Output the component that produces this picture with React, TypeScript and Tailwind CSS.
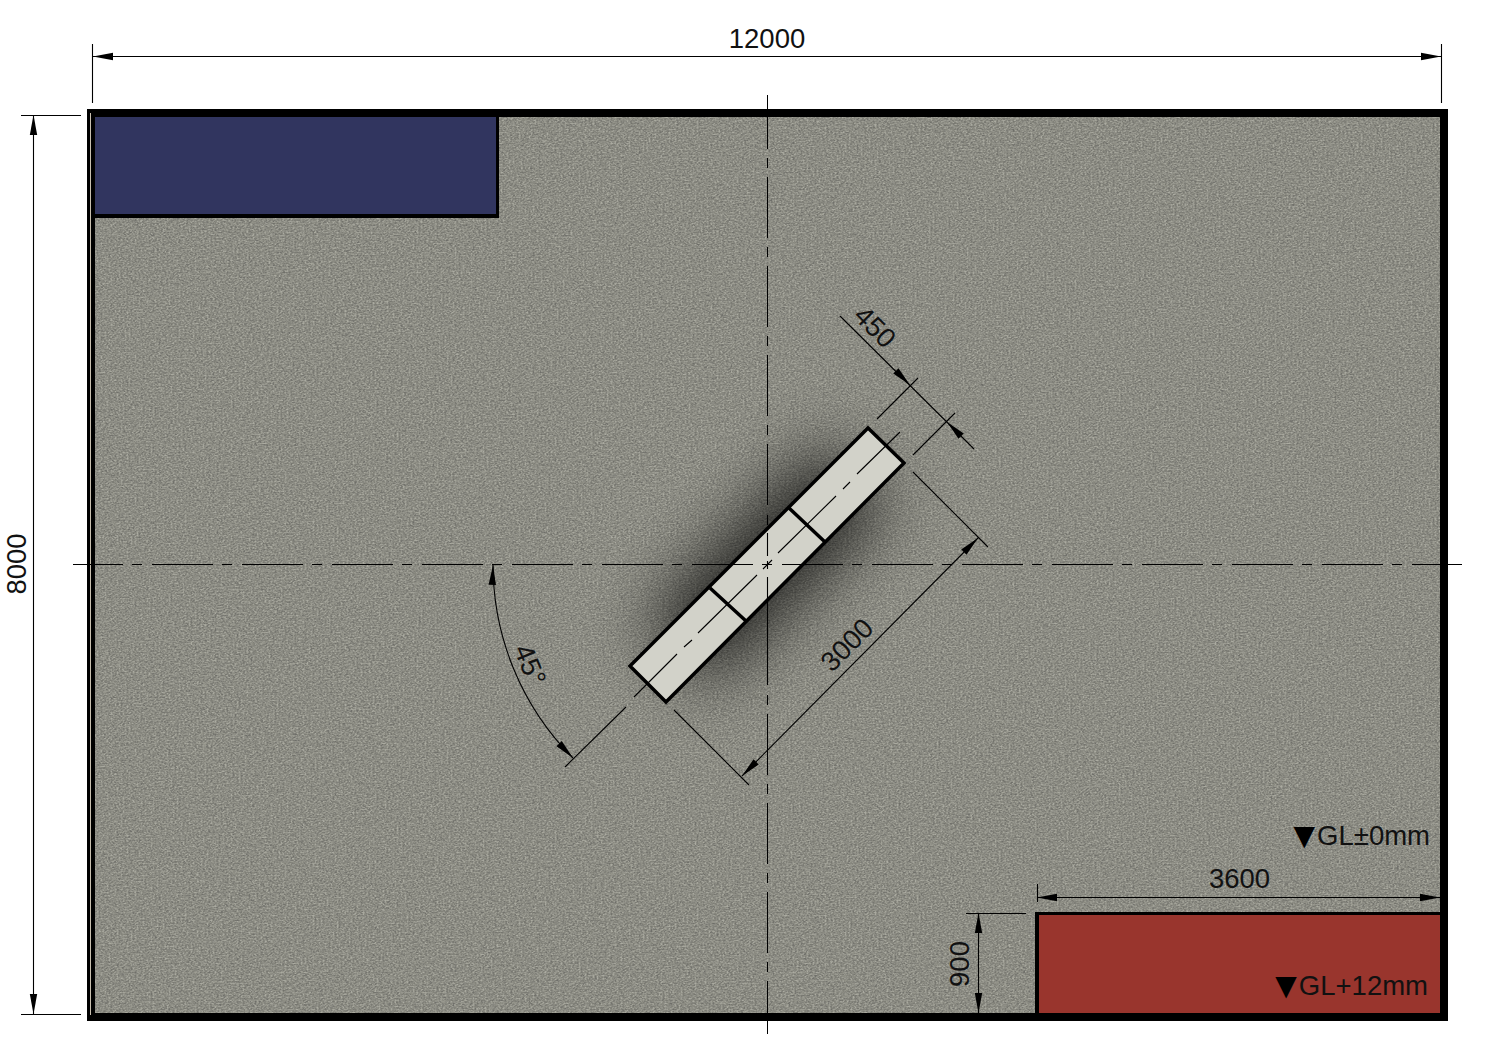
const Arrow = ({ x, y, angle, len = 20, half = 3.7 }: { x: number; y: number; angle: number; len?: number; half?: number }) => (
  // tip sits at x,y and the head points along angle
  <polygon points={`0,0 ${-len},${-half} ${-len},${half}`} fill="#000" transform={`translate(${x} ${y}) rotate(${angle})`} />
);

const Segment = ({ d, w = 1.1 }: { d: string; w?: number }) => <path d={d} fill="none" stroke="#000" strokeWidth={w} />;

const font = "font-['Liberation_Sans',Arial,sans-serif] text-[27.5px] leading-none text-[#111] whitespace-nowrap";
const labelClass = `absolute ${font} -translate-x-1/2 -translate-y-1/2`;

const Level = ({ text }: { text: string }) => (
  <div className={`flex items-center gap-[2px] ${font}`}>
    <span className="font-['DejaVu_Sans',sans-serif] text-[28px] leading-none text-black">▼</span>
    <span>{text}</span>
  </div>
);

export default function App() {
  return (
    <div className="relative w-[1497px] h-[1054px] overflow-hidden bg-white pl-[87px] pt-[109px]">
      {/* ground slab */}
      <div className="relative flex flex-col justify-between w-[1361px] h-[912px] border-[8px] border-black bg-[#87877e] overflow-hidden">
        <svg className="absolute inset-0 w-full h-full" xmlns="http://www.w3.org/2000/svg">
          <defs>
            <filter id="grain" x="0" y="0" width="100%" height="100%" colorInterpolationFilters="sRGB">
              <feTurbulence type="fractalNoise" baseFrequency="0.45 0.6" numOctaves="2" seed="4" />
              <feColorMatrix type="matrix" values="0 0 0 0 0.43  0 0 0 0 0.43  0 0 0 0 0.41  1.6 1.6 0 0 -1.25" />
            </filter>
            <filter id="grainLight" x="0" y="0" width="100%" height="100%" colorInterpolationFilters="sRGB">
              <feTurbulence type="fractalNoise" baseFrequency="0.5 0.65" numOctaves="2" seed="11" />
              <feColorMatrix type="matrix" values="0 0 0 0 0.67  0 0 0 0 0.67  0 0 0 0 0.63  1.6 1.6 0 0 -1.3" />
            </filter>
            <filter id="soft" filterUnits="userSpaceOnUse" x="-500" y="-500" width="1000" height="1000" colorInterpolationFilters="sRGB">
              <feGaussianBlur stdDeviation="34" />
            </filter>
          </defs>
          <rect width="100%" height="100%" filter="url(#grain)" />
          <rect width="100%" height="100%" filter="url(#grainLight)" />
          <rect x="-125" y="-42" width="250" height="84" fill="#000" opacity="0.8" filter="url(#soft)" transform="translate(672 447) rotate(-45)" />
        </svg>
        <div className="relative w-[404px] h-[101px] border-r-[3px] border-b-[4px] border-black bg-[#31355f]" />
        <div className="relative flex flex-col items-end">
          <div className="pr-[10px]">
            <Level text="GL±0mm" />
          </div>
          <div className={`w-[405px] mt-[15px] pl-[4px] text-center ${font}`}>3600</div>
          <div className="flex items-end justify-end w-[405px] h-[101px] mt-[20px] pr-[12px] pb-[13px] border-l-[4px] border-t-[3px] border-black bg-[#99352d]">
            <Level text="GL+12mm" />
          </div>
        </div>
      </div>
      <div className="absolute left-[90px] top-[113px] w-px h-[902px] bg-[#c9c0b0]" />

      {/* beam and dimension lines */}
      <svg className="absolute inset-0 w-full h-full" xmlns="http://www.w3.org/2000/svg">
        <polygon points="868,428 904,463 666,702 630,666" fill="#d2d2c9" stroke="#000" strokeWidth="3.5" strokeLinejoin="miter" />
        <Segment d="M789 508L825 542M710 588L746 621" w={3.5} />

        {/* centre lines */}
        <path d="M73 564.5H1462" stroke="#000" strokeWidth="1" strokeDasharray="61 9 10 10" strokeDashoffset="11" />
        <path d="M767.5 95V506" stroke="#000" strokeWidth="1" strokeDasharray="61 9 10 9" strokeDashoffset="7" />
        <Segment d="M767.5 515V525M767.5 533V556M767.5 561V569M767.5 577V685M767.5 695V705" />
        <path d="M767.5 714V1034" stroke="#000" strokeWidth="1" strokeDasharray="61 9 10 9" />
        <Segment d="M900 432L857 474M850 482L843 489M836 496L778 553M772 560L763 569M757 575L698 633M692 640L684 647M677 654L634 697M626 707L565 767" />

        {/* overall dimensions */}
        <Segment d="M93 56.5H1441M92.5 44V103M1441.5 44V103" />
        <Arrow x={93} y={56.5} angle={180} />
        <Arrow x={1441} y={56.5} angle={0} />
        <Segment d="M33.5 115V1014M21 115.5H81M21 1014.5H81" />
        <Arrow x={33.5} y={115} angle={-90} />
        <Arrow x={33.5} y={1014} angle={90} />

        {/* beam width */}
        <Segment d="M840 316L974 449M877 419L918 378M913 455L955 413" />
        <Arrow x={910} y={385} angle={45} />
        <Arrow x={947} y={422} angle={225} />

        {/* beam length */}
        <Segment d="M978 538L742 776M913 472L988 547M674 710L749 785" />
        <Arrow x={978} y={538} angle={-45} />
        <Arrow x={742} y={776} angle={135} />

        {/* angle */}
        <path d="M493 564A274 274 0 0 0 573 758" fill="none" stroke="#000" strokeWidth="1.1" />
        <Arrow x={493} y={565} angle={-88} />
        <Arrow x={573} y={758} angle={46} />

        {/* red area */}
        <Segment d="M1037 897.5H1440M1037.5 884V902M966 913.5H1026M978.5 913V1013" />
        <Arrow x={1037} y={897.5} angle={180} />
        <Arrow x={1440} y={897.5} angle={0} />
        <Arrow x={978.5} y={913} angle={-90} />
        <Arrow x={978.5} y={1013} angle={90} />
      </svg>

      <span className={`${labelClass} left-[767px] top-[39px]`}>12000</span>
      <span className={`${labelClass} left-[17px] top-[564px] -rotate-90`}>8000</span>
      <span className={`${labelClass} left-[875px] top-[327px] rotate-45`}>450</span>
      <span className={`${labelClass} left-[847px] top-[645px] -rotate-45`}>3000</span>
      <span className={`${labelClass} left-[530px] top-[665px] rotate-[67.5deg]`}>45°</span>
      <span className={`${labelClass} left-[960px] top-[964px] -rotate-90`}>900</span>
    </div>
  );
}
